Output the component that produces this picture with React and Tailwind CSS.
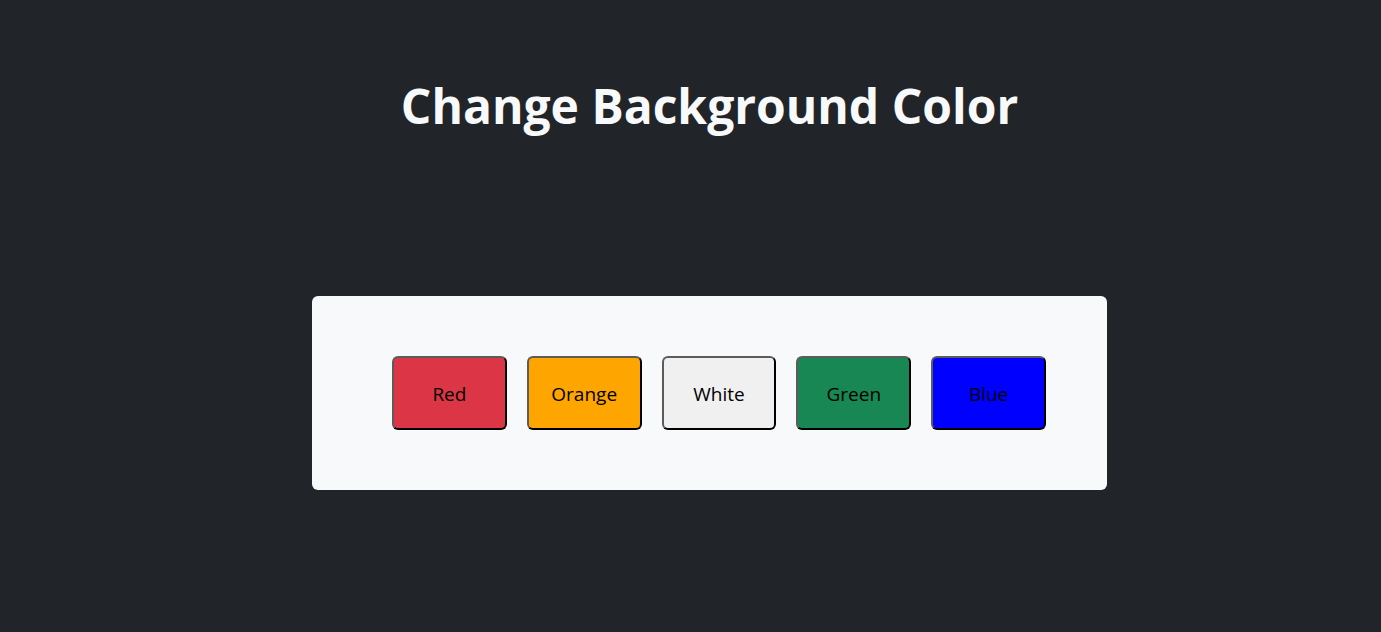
import { useState } from "react";

const colors = [
  { name: "Red", bg: "bg-[#dc3545]" },
  { name: "Orange", bg: "bg-[#ffa500]" },
  { name: "White", bg: "bg-[#f0f0f0]" },
  { name: "Green", bg: "bg-[#198754]" },
  { name: "Blue", bg: "bg-[#0000ff]" },
];

export default function App() {
  const [picked, setPicked] = useState(null);

  return (
    <div className="min-h-[632px] w-full bg-[#212529] font-['Open_Sans',sans-serif]">
      <div className="ml-[312px] w-[795px] pt-[74px]">
        <h1 className="text-center text-[48px] font-bold leading-[64px] text-[#f8f9fa]">
          Change Background Color
        </h1>

        {/* Button panel */}
        <div className="mt-[158px] flex gap-5 rounded-md bg-[#f8f9fa] py-[60px] pl-[80px] pr-[61px]">
          {colors.map((c) => (
            <button
              key={c.name}
              onClick={() => setPicked(c.name)}
              className={`h-[74px] w-[115px] rounded-md border-2 border-t-[#5c5c5c] border-l-[#5c5c5c] border-r-black border-b-black pt-[2px] text-[19px] text-black ${c.bg}`}
            >
              {c.name}
            </button>
          ))}
        </div>
      </div>
    </div>
  );
}
